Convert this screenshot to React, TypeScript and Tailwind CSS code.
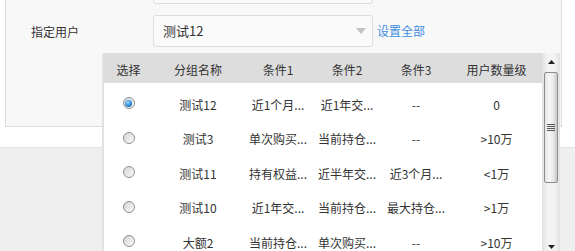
import React from 'react';

type Row = { name: string; c1: string; c2: string; c3: string; level: string; checked?: boolean };

const rows: Row[] = [
  { name: '测试12', c1: '近1个月...', c2: '近1年交...', c3: '--', level: '0', checked: true },
  { name: '测试3', c1: '单次购买...', c2: '当前持仓...', c3: '--', level: '>10万' },
  { name: '测试11', c1: '持有权益...', c2: '近半年交...', c3: '近3个月...', level: '<1万' },
  { name: '测试10', c1: '近1年交...', c2: '当前持仓...', c3: '最大持仓...', level: '>1万' },
  { name: '大额2', c1: '当前持仓...', c2: '单次购买...', c3: '--', level: '>10万' },
];

const Radio: React.FC<{ checked?: boolean }> = ({ checked }) => (
  <span className="mb-[3px] w-[12px] h-[12px] rounded-full border border-[#8f9090] bg-[linear-gradient(135deg,#d4d4d4,#fbfbfb)] flex items-center justify-center">
    {checked && (
      <span className="w-[7px] h-[7px] rounded-full bg-[radial-gradient(circle_at_40%_35%,#9fd8ff,#2b86d6_55%,#0c4a8a)]" />
    )}
  </span>
);

const Arrow: React.FC<{ down?: boolean }> = ({ down }) => (
  <svg width="7" height="4" viewBox="0 0 7 4">
    <polygon points={down ? '0,0 7,0 3.5,4' : '0,4 7,4 3.5,0'} fill="#222" />
  </svg>
);

const Scrollbar: React.FC = () => (
  <div className="w-[17px] shrink-0 flex flex-col bg-[linear-gradient(to_right,#e6e6e6,#f3f3f3_30%,#f3f3f3_70%,#e6e6e6)] border-l border-[#e2e2e2]">
    <div className="h-[17px] flex items-center justify-center">
      <Arrow />
    </div>
    <div className="mt-[2px] mx-[1px] h-[111px] rounded-[2px] border border-[#8d8d8d] bg-[linear-gradient(to_right,#e4e4e4,#f8f8f8_35%,#e9e9e9_70%,#c9c9c9)] flex flex-col items-center justify-center gap-[1px]">
      <span className="w-[8px] h-[1px] bg-[#555]" />
      <span className="w-[8px] h-[1px] bg-[#555]" />
      <span className="w-[8px] h-[1px] bg-[#555]" />
      <span className="w-[8px] h-[1px] bg-[#555]" />
    </div>
    <div className="flex-1" />
    <div className="h-[17px] flex items-center justify-center">
      <Arrow down />
    </div>
  </div>
);

const cols = ['w-[49px]', 'w-[90px]', 'w-[70px]', 'w-[68px]', 'w-[70px]', 'w-[91px]'];

const App: React.FC = () => {
  return (
    <div className="w-[575px] h-[251px] bg-[#efefef] relative overflow-hidden text-[#333] font-['Noto_Sans_CJK_SC',sans-serif]">
      <div className="h-[148px] bg-white border-b border-[#e3e3e3]">
        <div className="ml-[5px] w-[557px] h-[127px] border-x border-b border-[#dddddd] bg-[#f8f8f8] flex flex-col">
          <div className="-mt-[28px] ml-[147px] w-[220px] h-[32px] border border-[#dddddd] rounded-[3px] bg-[#fafafa]" />
          <div className="mt-[11px] flex items-center">
            <div className="w-[147px] pl-[25px] pt-[2px] text-[12px]">指定用户</div>
            <div className="w-[220px] h-[32px] border border-[#dddddd] rounded-[3px] bg-[#fafafa] flex items-center justify-between pl-[9px] pr-[6px]">
              <span className="text-[13px] text-[#333]">测试12</span>
              <svg width="10" height="6" viewBox="0 0 10 6">
                <polygon points="0,0 10,0 5,6" fill="#c2c2c2" />
              </svg>
            </div>
            <a className="ml-[4px] text-[12px] text-[#3e8ee0] cursor-pointer">设置全部</a>
          </div>
        </div>
      </div>

      <div className="absolute left-[102px] top-[53px] w-[458px] h-[202px] bg-white border-l-2 border-r border-[#e2e2e2] flex">
        <div className="flex-1 flex flex-col text-[12px]">
          <div className="h-[34px] pt-[4px] bg-[#dddddd] flex items-center">
            {['选择', '分组名称', '条件1', '条件2', '条件3', '用户数量级'].map((h, i) => (
              <div key={h} className={`${cols[i]} text-center`}>{h}</div>
            ))}
          </div>
          {rows.map((r) => (
            <div key={r.name} className="h-[34.5px] pt-[10px] shrink-0 flex items-center">
              <div className={`${cols[0]} flex justify-center`}>
                <Radio checked={r.checked} />
              </div>
              <div className={`${cols[1]} text-center`}>{r.name}</div>
              <div className={`${cols[2]} text-center whitespace-nowrap`}>{r.c1}</div>
              <div className={`${cols[3]} text-center whitespace-nowrap`}>{r.c2}</div>
              <div className={`${cols[4]} text-center whitespace-nowrap`}>{r.c3}</div>
              <div className={`${cols[5]} text-center`}>{r.level}</div>
            </div>
          ))}
        </div>
        <Scrollbar />
      </div>
    </div>
  );
};

export default App;
